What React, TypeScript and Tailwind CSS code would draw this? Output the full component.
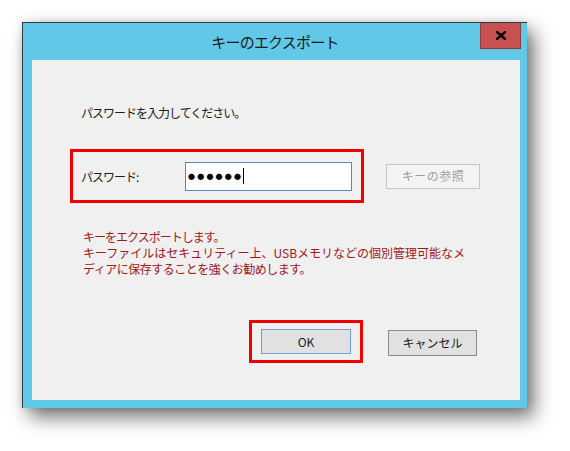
export default function App() {
  const font = { fontFamily: '"Noto Sans CJK JP", "Noto Sans", sans-serif' };

  return (
    <div className="w-[570px] h-[451px] bg-white pl-[22px] pt-[22px]" style={font}>
      {/* window frame */}
      <div className="relative flex flex-col w-[505px] h-[386px] bg-[#62c8e8] border-l border-t border-[#2b3d4a] shadow-[7px_9px_18px_rgba(0,0,0,0.55),0_0_8px_rgba(0,0,0,0.12)]">
        {/* title bar */}
        <div className="flex items-center justify-center h-[37px] shrink-0">
          <span className="text-[15px] leading-none tracking-[-0.8px] text-[#1a1a1a]">キーのエクスポート</span>
        </div>
        <button
          type="button"
          className="absolute top-0 right-[6px] flex items-center justify-center w-[41px] h-[26px] bg-[#c75050] border border-t-0 border-[#8e3b3b]"
        >
          <svg width="10" height="9" viewBox="0 0 10 9">
            <path d="M1 1 L9 8 M9 1 L1 8" stroke="#000" strokeWidth="2.4" strokeLinecap="square" />
          </svg>
        </button>

        {/* content */}
        <div className="flex flex-col flex-1 ml-[9px] mr-[7px] mb-[8px] bg-[#f0f0f0] text-[#1a1a1a]">
          <p className="mt-[45px] ml-[49px] text-[12px] leading-[16px] tracking-[-1px]">
            パスワードを入力してください。
          </p>

          <div className="flex items-center mt-[28px] ml-[38px]">
            <div className="flex items-center w-[294px] h-[54px] border-[3px] border-[#f00000] pl-[8px]">
              <span className="w-[104px] text-[12px] leading-[16px] tracking-[-1px] pt-[2px]">パスワード:</span>
              <div className="flex items-center w-[167px] h-[29px] bg-white border border-[#5a88b6] pl-[2px]">
                <span className="text-[7px] leading-none text-black tracking-[2.2px]">●●●●●●</span>
                <span className="w-px h-[16px] bg-black" />
              </div>
            </div>
            <button
              type="button"
              disabled
              className="ml-[22px] w-[94px] h-[25px] bg-[#f4f4f4] border border-[#c6c6c6] text-[12px] leading-none tracking-[0.5px] text-[#9f9f9f]"
            >
              キーの参照
            </button>
          </div>

          <div className="mt-[26px] ml-[51px] text-[12px] leading-[16px] text-[#a01818] whitespace-nowrap">
            <div className="tracking-[-1px]">キーをエクスポートします。</div>
            <div>キーファイルはセキュリティー上、USBメモリなどの個別管理可能なメ</div>
            <div className="tracking-[-0.5px]">ディアに保存することを強くお勧めします。</div>
          </div>

          <div className="flex items-center mt-[43px] ml-[217px]">
            <div className="flex items-center justify-center w-[114px] h-[43px] border-[3px] border-[#f00000]">
              <button
                type="button"
                className="w-[90px] h-[25px] bg-[#e1e1e1] border border-[#6e9fcf] text-[12px] leading-none text-[#1a1a1a]"
              >
                OK
              </button>
            </div>
            <button
              type="button"
              className="ml-[25px] mt-[2px] w-[89px] h-[26px] bg-[#e1e1e1] border border-[#8a8a8a] text-[12px] leading-none text-[#1a1a1a]"
            >
              キャンセル
            </button>
          </div>
        </div>
      </div>
    </div>
  );
}
